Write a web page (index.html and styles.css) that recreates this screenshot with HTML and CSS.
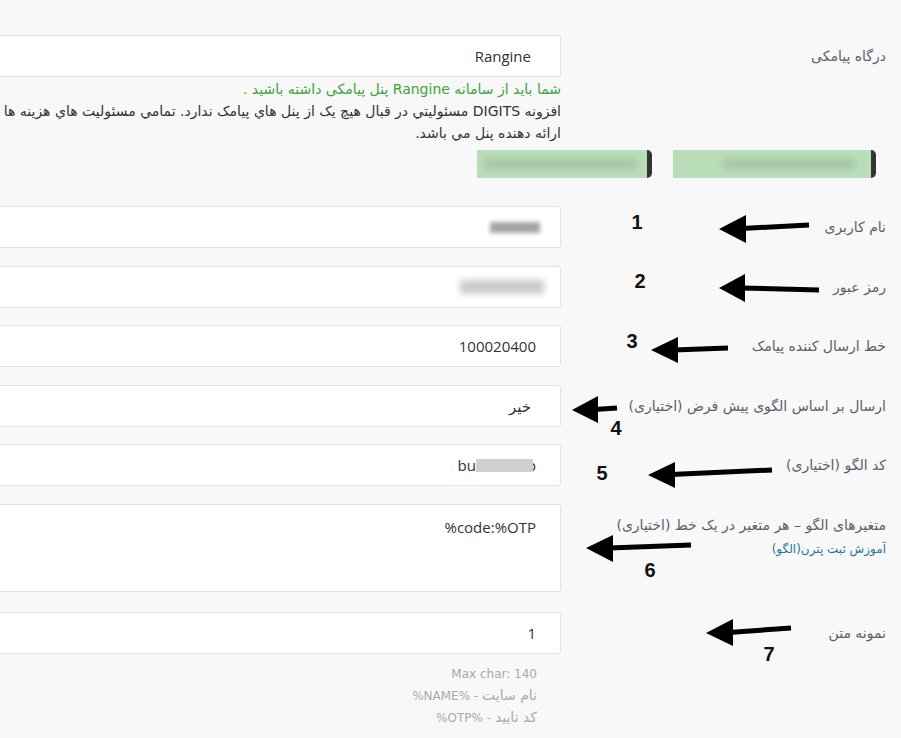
FILE: index.html
```html
<!DOCTYPE html>
<html lang="fa" dir="rtl">
<head>
<meta charset="utf-8">
<title>تنظیمات پیامک</title>
<link rel="stylesheet" href="styles.css">
</head>
<body>
<div class="page">
  <div class="row row-first">
    <div class="label">درگاه پیامکی</div>
    <div class="field">
      <div class="input select">Rangine</div>
      <p class="note-green">شما باید از سامانه Rangine پنل پیامکی داشته باشید .</p>
      <p class="desc"><span class="line">افزونه DIGITS مسئوليتي در قبال هيچ يک از پنل هاي پيامک ندارد. تمامي مسئوليت هاي هزينه ها بر عهده</span><span class="line">ارائه دهنده پنل مي باشد.</span></p>
    </div>
  </div>

  <div class="btn-row">
    <div class="gbtn gbtn-wide"><span class="gblur gblur-a"></span></div>
    <div class="gbtn gbtn-narrow"><span class="gblur gblur-b"></span></div>
  </div>

  <div class="row row-first-field">
    <div class="label">نام کاربری</div>
    <div class="field"><div class="input"><span class="smudge smudge-user"></span></div></div>
  </div>

  <div class="row">
    <div class="label">رمز عبور</div>
    <div class="field"><div class="input"><span class="smudge smudge-pass"></span></div></div>
  </div>

  <div class="row">
    <div class="label">خط ارسال کننده پیامک</div>
    <div class="field"><div class="input">100020400</div></div>
  </div>

  <div class="row">
    <div class="label">ارسال بر اساس الگوی پیش فرض (اختیاری)</div>
    <div class="field"><div class="input select">خیر</div></div>
  </div>

  <div class="row">
    <div class="label">کد الگو (اختیاری)</div>
    <div class="field"><div class="input"><span class="ltr">bu<span class="mask"></span>o</span></div></div>
  </div>

  <div class="row">
    <div class="label">متغیرهای الگو – هر متغیر در یک خط (اختیاری)<span class="help-link">آموزش ثبت پترن(الگو)</span></div>
    <div class="field"><div class="textarea"><span class="ltr-text">%code:%OTP</span></div></div>
  </div>

  <div class="row row-last">
    <div class="label">نمونه متن</div>
    <div class="field">
      <div class="input">1</div>
      <div class="hint">
        <span class="hint-line">Max char: 140</span>
        <span class="hint-line"><span class="fa">نام سایت</span> - %NAME%</span>
        <span class="hint-line"><span class="fa">کد تایید</span> - %OTP%</span>
      </div>
    </div>
  </div>
</div>

<svg class="annot" width="901" height="738" viewBox="0 0 901 738" xmlns="http://www.w3.org/2000/svg">
  <g class="arrow">
    <line x1="742" y1="228.5" x2="809" y2="225"/>
    <polygon points="719,229 746,215 746,243"/>
  </g>
  <g class="arrow">
    <line x1="741" y1="288" x2="819" y2="290"/>
    <polygon points="719,288 745,274 745,302"/>
  </g>
  <g class="arrow">
    <line x1="674" y1="350" x2="728" y2="348"/>
    <polygon points="651,350 678,337 678,363"/>
  </g>
  <g class="arrow">
    <line x1="594" y1="409.5" x2="617" y2="408"/>
    <polygon points="572,410 598,396 598,423"/>
  </g>
  <g class="arrow">
    <line x1="671" y1="474.5" x2="772" y2="470"/>
    <polygon points="648,475 675,462 675,488"/>
  </g>
  <g class="arrow">
    <line x1="609" y1="548" x2="691" y2="545"/>
    <polygon points="586,548 613,535 613,562"/>
  </g>
  <g class="arrow">
    <line x1="729" y1="632.5" x2="791" y2="628"/>
    <polygon points="706,633 733,619 733,646"/>
  </g>
  <text class="num" x="637" y="229">1</text>
  <text class="num" x="640" y="288">2</text>
  <text class="num" x="632" y="348">3</text>
  <text class="num" x="616" y="435">4</text>
  <text class="num" x="602" y="480">5</text>
  <text class="num" x="650" y="577">6</text>
  <text class="num" x="769" y="661">7</text>
</svg>
</body>
</html>
```

FILE: styles.css
```css
html {
  direction: rtl;
}
body {
  margin: 0;
  background: #f8f8f8;
  font-family: "DejaVu Sans", sans-serif;
  overflow: hidden;
}
.page {
  width: 1600px;
  padding-top: 35px;
}
.row {
  display: flex;
  align-items: flex-start;
  margin-top: 17.5px;
}
.row-first {
  margin-top: 0;
}
.row-first-field {
  margin-top: 28px;
}
.row-last {
  margin-top: 20px;
}
.label {
  flex: 0 0 285px;
  box-sizing: content-box;
  padding-right: 15px;
  padding-top: 11px;
  font-size: 14px;
  line-height: 20px;
  color: #5a6069;
  text-align: right;
}
.help-link {
  display: block;
  margin-top: 5px;
  font-size: 12px;
  line-height: 18px;
  color: #1f7a91;
}
.field {
  flex: 0 0 1200px;
  margin-right: 40px;
}
.input {
  box-sizing: border-box;
  height: 42px;
  background: #fff;
  border: 1px solid #e3e3e3;
  border-radius: 3px;
  display: flex;
  align-items: center;
  padding-right: 24px;
  font-family: "Open Sans", "DejaVu Sans", sans-serif;
  font-size: 15px;
  color: #333;
}
.select {
  padding-right: 29px;
}
.textarea {
  box-sizing: border-box;
  height: 88px;
  background: #fff;
  border: 1px solid #e3e3e3;
  border-radius: 3px;
  padding: 11px 24px 0 0;
  font-family: "Open Sans", sans-serif;
  font-size: 15px;
  line-height: 22px;
  color: #333;
}
.ltr-text {
  direction: ltr;
  unicode-bidi: isolate;
}
.note-green {
  margin: 1px 0 0;
  font-size: 14px;
  line-height: 22px;
  color: #3aa53a;
}
.desc {
  margin: 0;
  font-size: 14px;
  line-height: 22px;
  color: #333;
}
.line {
  display: block;
  white-space: nowrap;
}
.btn-row {
  display: flex;
  gap: 21px;
  padding-right: 25px;
  margin-top: 6px;
}
.gbtn {
  box-sizing: border-box;
  height: 28px;
  background: #b9dcb9;
  border-right: 5px solid #333;
  border-radius: 0 5px 5px 0;
  display: flex;
  align-items: center;
  overflow: hidden;
}
.gbtn-wide {
  width: 203px;
}
.gbtn-narrow {
  width: 175px;
}
.gblur {
  display: block;
  height: 10px;
  margin: 0 16px 0 50px;
  flex: 1;
  background: #a6c6a6;
  filter: blur(3px);
}
.gblur-b {
  margin: 0 10px 0 8px;
}
.smudge {
  display: block;
  filter: blur(2px);
}
.smudge-user {
  width: 50px;
  height: 11px;
  margin-right: -4px;
  background: #a4a4a4;
}
.smudge-pass {
  width: 84px;
  height: 14px;
  margin-right: -8px;
  background: #cbcbcb;
  filter: blur(3px);
}
.ltr {
  direction: ltr;
  display: inline-flex;
  align-items: center;
}
.mask {
  display: inline-block;
  width: 57px;
  height: 13px;
  background: #cfcfcf;
  filter: blur(0.6px);
  margin-right: -6px;
  position: relative;
}
.hint {
  margin-top: 10px;
  padding-right: 24px;
  font-size: 12px;
  line-height: 21px;
  color: #a9a9a9;
}
.hint-line {
  display: block;
}
.fa {
  font-size: 14px;
}
.annot {
  position: absolute;
  top: 0;
  left: 0;
  pointer-events: none;
}
.arrow line {
  stroke: #000;
  stroke-width: 5;
}
.arrow polygon {
  fill: #000;
}
.num {
  font-family: "Liberation Sans", Arial, sans-serif;
  font-weight: bold;
  font-size: 20px;
  text-anchor: middle;
  fill: #111;
}
```
